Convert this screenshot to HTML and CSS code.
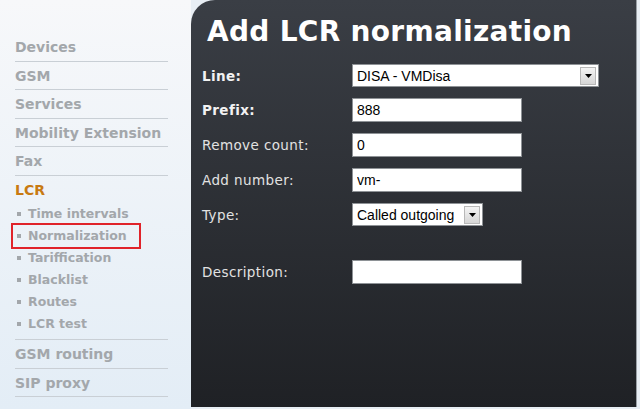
FILE: index.html
```html
<!DOCTYPE html>
<html lang="en">
<head>
    <meta charset="UTF-8">
    <title>Add LCR normalization</title>
    <link rel="stylesheet" href="styles.css">
</head>
<body>
    <div class="page">
        <nav class="sidebar">
            <a class="nav-item">Devices</a>
            <a class="nav-item">GSM</a>
            <a class="nav-item">Services</a>
            <a class="nav-item">Mobility Extension</a>
            <a class="nav-item">Fax</a>
            <div class="nav-group">
                <a class="nav-head">LCR</a>
                <ul class="sub-nav">
                    <li>Time intervals</li>
                    <li class="marked">Normalization</li>
                    <li>Tariffication</li>
                    <li>Blacklist</li>
                    <li>Routes</li>
                    <li>LCR test</li>
                </ul>
            </div>
            <a class="nav-item">GSM routing</a>
            <a class="nav-item">SIP proxy</a>
        </nav>
        <main class="panel">
            <h1>Add LCR normalization</h1>
            <div class="form">
                <label class="strong">Line:</label>
                <div class="select wide">
                    <span class="value">DISA - VMDisa</span>
                    <span class="arrow"><svg width="7" height="4" viewBox="0 0 7 4"><path d="M0 0h7L3.5 4z" fill="#000"/></svg></span>
                </div>
                <label class="strong">Prefix:</label>
                <input type="text" value="888">
                <label>Remove count:</label>
                <input type="text" value="0">
                <label>Add number:</label>
                <input type="text" value="vm-">
                <label>Type:</label>
                <div class="select narrow">
                    <span class="value">Called outgoing</span>
                    <span class="arrow"><svg width="7" height="4" viewBox="0 0 7 4"><path d="M0 0h7L3.5 4z" fill="#000"/></svg></span>
                </div>
                <label class="spaced">Description:</label>
                <input class="spaced" type="text" value="">
            </div>
        </main>
    </div>
</body>
</html>
```

FILE: styles.css
```css
* {
    box-sizing: border-box;
}
body {
    margin: 0;
    padding: 0;
    background: #e8eef4;
    font-family: "DejaVu Sans", Verdana, sans-serif;
}
.page {
    display: flex;
    width: 640px;
    height: 409px;
    overflow: hidden;
}
.sidebar {
    width: 191px;
    flex: none;
    padding: 33px 0 0 15px;
    background: linear-gradient(#f7f8fa, #e3edf6);
}
.nav-item, .nav-head {
    display: block;
    width: 153px;
    height: 28.6px;
    line-height: 28px;
    font-size: 14px;
    font-weight: bold;
    color: #a3a7ab;
    border-bottom: 1px solid #c9cfd5;
}
.nav-group {
    border-bottom: 1px solid #c9cfd5;
    width: 153px;
    padding-bottom: 4px;
}
.nav-head {
    color: #c87a12;
    border-bottom: none;
    height: 27px;
}
.sub-nav {
    list-style: none;
    margin: 0;
    padding: 0;
}
.sub-nav li {
    position: relative;
    height: 22px;
    line-height: 22px;
    padding-left: 13px;
    font-size: 12.5px;
    font-weight: bold;
    color: #a3a7ab;
}
.sub-nav li::before {
    content: "";
    position: absolute;
    left: 2px;
    top: 9px;
    width: 4px;
    height: 4px;
    background: #a3a7ab;
}
.sub-nav li.marked {
    outline: 2px solid #e0232a;
    margin-left: -2px;
    padding-left: 15px;
    width: 126px;
}
.sub-nav li.marked::before {
    left: 4px;
}
.panel {
    flex: 1;
    margin-right: 3px;
    margin-bottom: 2px;
    border-radius: 24px 0 0 0;
    background: linear-gradient(#3a3e45, #1f2125);
    border-right: 1px solid #9aa0a6;
    padding: 14px 0 0 11px;
    color: #e6e6e6;
}
h1 {
    margin: 0 0 14px 5px;
    font-size: 28px;
    line-height: 36px;
    font-weight: bold;
    color: #ffffff;
    letter-spacing: 0.3px;
}
.form {
    display: grid;
    grid-template-columns: 150px auto;
    row-gap: 11px;
    align-items: center;
    justify-items: start;
}
label {
    font-size: 13.5px;
    color: #e2e2e2;
    letter-spacing: 0.4px;
}
label.strong {
    font-weight: bold;
    color: #f2f2f2;
}
input {
    width: 170px;
    height: 24px;
    margin: 0;
    padding: 1px 4px;
    border: 1px solid #8e9296;
    background: #fff;
    font-family: "Liberation Sans", Arial, sans-serif;
    font-size: 14px;
    color: #000;
}
.spaced {
    margin-top: 23px;
}
.select {
    display: flex;
    align-items: center;
    justify-content: space-between;
    height: 23px;
    padding: 1px 2px 1px 4px;
    border: 1px solid #8e9296;
    background: #fff;
    font-family: "Liberation Sans", Arial, sans-serif;
    font-size: 14px;
    color: #000;
}
.wide {
    width: 247px;
}
.narrow {
    width: 131px;
}
.arrow {
    display: flex;
    align-items: center;
    justify-content: center;
    width: 16px;
    height: 18px;
    background: linear-gradient(#f4f4f4, #d6d6d6);
    border: 1px solid #b8b8b8;
}
```
